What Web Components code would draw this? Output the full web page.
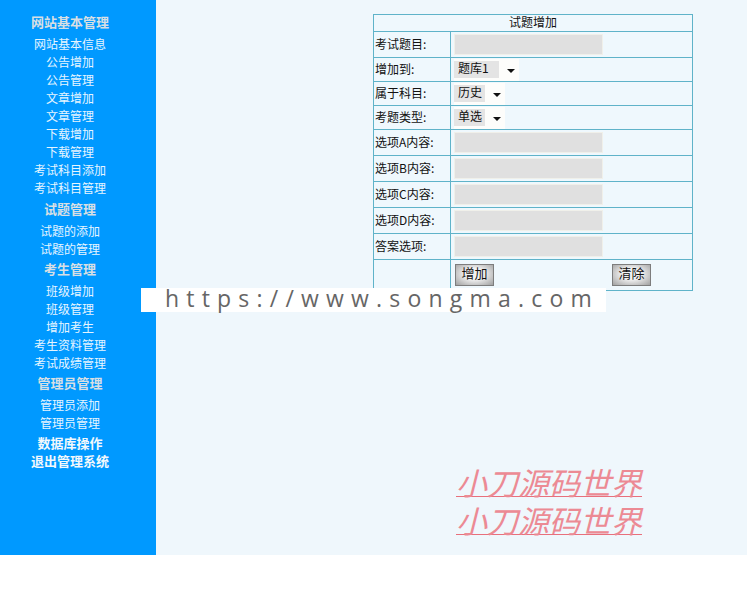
<!DOCTYPE html>
<html>
<head>
<meta charset="utf-8">
<title>试题增加</title>
<style>
  html, body { margin: 0; padding: 0; background: #fff; }
  body { font-family: "Noto Sans CJK SC", "Liberation Sans", sans-serif; }
</style>
</head>
<body>
<admin-page>
  <side-menu slot="side">
    <menu-item head>网站基本管理</menu-item>
    <menu-item>网站基本信息</menu-item>
    <menu-item>公告增加</menu-item>
    <menu-item>公告管理</menu-item>
    <menu-item>文章增加</menu-item>
    <menu-item>文章管理</menu-item>
    <menu-item>下载增加</menu-item>
    <menu-item>下载管理</menu-item>
    <menu-item>考试科目添加</menu-item>
    <menu-item>考试科目管理</menu-item>
    <menu-item head style="margin-top:1px">试题管理</menu-item>
    <menu-item>试题的添加</menu-item>
    <menu-item>试题的管理</menu-item>
    <menu-item head>考生管理</menu-item>
    <menu-item>班级增加</menu-item>
    <menu-item>班级管理</menu-item>
    <menu-item>增加考生</menu-item>
    <menu-item>考生资料管理</menu-item>
    <menu-item>考试成绩管理</menu-item>
    <menu-item head>管理员管理</menu-item>
    <menu-item>管理员添加</menu-item>
    <menu-item>管理员管理</menu-item>
    <menu-item strong style="margin-top:3px">数据库操作</menu-item>
    <menu-item strong>退出管理系统</menu-item>
  </side-menu>

  <exam-form>
    <form-row h="26" label="考试题目:"><text-box></text-box></form-row>
    <form-row h="24" label="增加到:"><drop-box w="65" pad="45">题库1</drop-box></form-row>
    <form-row h="24" label="属于科目:"><drop-box w="51" pad="31">历史</drop-box></form-row>
    <form-row h="24" label="考题类型:"><drop-box w="51" pad="31">单选</drop-box></form-row>
    <form-row h="26" label="选项A内容:"><text-box></text-box></form-row>
    <form-row h="26" label="选项B内容:"><text-box></text-box></form-row>
    <form-row h="26" label="选项C内容:"><text-box></text-box></form-row>
    <form-row h="26" label="选项D内容:"><text-box></text-box></form-row>
    <form-row h="26" label="答案选项:"><text-box></text-box></form-row>
    <form-row h="31" label="">
      <form-actions>
        <grey-button>增加</grey-button>
        <grey-button>清除</grey-button>
      </form-actions>
    </form-row>
  </exam-form>

  <brand-text>小刀源码世界</brand-text>
  <brand-text>小刀源码世界</brand-text>
</admin-page>
<url-banner>https://www.songma.com</url-banner>

<script>
function define(name, css, html) {
  customElements.define(name, class extends HTMLElement {
    connectedCallback() {
      if (this.shadowRoot) return;
      this.attachShadow({ mode: 'open' });
      this.shadowRoot.innerHTML = '<style>' + css + '</style>' + html(this);
    }
  });
}

define('admin-page', `
  :host { display: grid; grid-template-columns: 156px 1fr; height: 555px; background: #eff7fc; }
  .main { padding: 14px 0 0 217px; min-width: 0; }
`, () => `<slot name="side"></slot><div class="main"><slot></slot></div>`);

define('side-menu', `
  :host { display: block; background: #0099ff; padding: 11px 16px 0 0; }
  .list { display: flex; flex-direction: column; align-items: center; }
`, () => `<div class="list"><slot></slot></div>`);

define('menu-item', `
  :host { display: block; height: 18px; line-height: 18px; font-size: 12px; color: #e6f5ff; white-space: nowrap; }
  :host([head]) { height: 24px; line-height: 22px; font-size: 13px; font-weight: 700; color: #d8dfe4; }
  :host([strong]) { line-height: 15px; font-size: 13px; font-weight: 700; color: #f2f8fc; }
`, () => `<slot></slot>`);

define('exam-form', `
  :host { display: block; width: 320px; box-sizing: border-box; border: 1px solid #5fb3c9; background: #eff8fd; font-size: 12px; color: #111; }
  .title { height: 16px; line-height: 14px; text-align: center; }
`, () => `<div class="title">试题增加</div><slot></slot>`);

define('form-row', `
  :host { display: grid; grid-template-columns: 77px 1fr; border-top: 1px solid #5fb3c9; box-sizing: border-box; }
  .label { display: flex; align-items: center; padding: 0 0 2px 1px; border-right: 1px solid #5fb3c9; white-space: nowrap; }
  .field { display: flex; align-items: center; padding-left: 3px; min-width: 0; }
`, (el) => `<style>:host { height: ${el.getAttribute('h')}px; }</style>
  <div class="label">${el.getAttribute('label')}</div><div class="field"><slot></slot></div>`);

define('text-box', `
  :host { display: block; width: 147px; height: 19px; margin-left: 1px; background: #e0e0e0; box-shadow: 0 0 0 1px #f0f0ea; }
`, () => ``);

define('drop-box', `
  :host { display: flex; align-items: center; box-sizing: border-box; height: 22px; background: #fdfdfb; position: relative; }
  .val { height: 17px; line-height: 14px; padding-left: 4px; box-sizing: border-box; background: #e4e4e4; font-size: 12px; }
  .arrow { position: absolute; right: 4px; top: 10px; width: 0; height: 0;
    border-left: 4px solid transparent; border-right: 4px solid transparent; border-top: 4px solid #111; }
`, (el) => `<style>:host { width: ${el.getAttribute('w')}px; } .val { width: ${el.getAttribute('pad')}px; }</style>
  <span class="val"><slot></slot></span><span class="arrow"></span>`);

define('form-actions', `
  :host { display: flex; justify-content: space-between; width: 196px; margin-left: 1px; }
`, () => `<slot></slot>`);

define('grey-button', `
  :host { display: block; box-sizing: border-box; width: 39px; height: 22px; line-height: 16px; text-align: center;
    font-size: 13px; color: #111; border: 1px solid #7d7d7d;
    background: radial-gradient(ellipse at 50% 45%, #f2f2f2 35%, #a0a0a0 100%); }
`, () => `<slot></slot>`);

define('brand-text', `
  :host { display: block; width: 186px; margin-left: 83px; height: 38px; line-height: 34px; font-size: 31px;
    font-family: "Liberation Sans", "Noto Sans CJK SC", sans-serif;
    font-style: italic; color: #ec8a94; white-space: nowrap; }
  :host(:first-of-type) { margin-top: 177px; }
  span { text-decoration: underline; text-decoration-thickness: 1px; text-decoration-color: #e8707c; }
`, () => `<span><slot></slot></span>`);

define('url-banner', `
  :host { position: absolute; left: 141px; top: 288px; width: 465px; height: 24px; background: #fff; box-sizing: border-box;
    padding-left: 24px; line-height: 21px; font-family: "Open Sans", "Liberation Sans", sans-serif; font-size: 23px;
    letter-spacing: 7.2px; color: #666; white-space: nowrap; }
`, () => `<slot></slot>`);
</script>
</body>
</html>
